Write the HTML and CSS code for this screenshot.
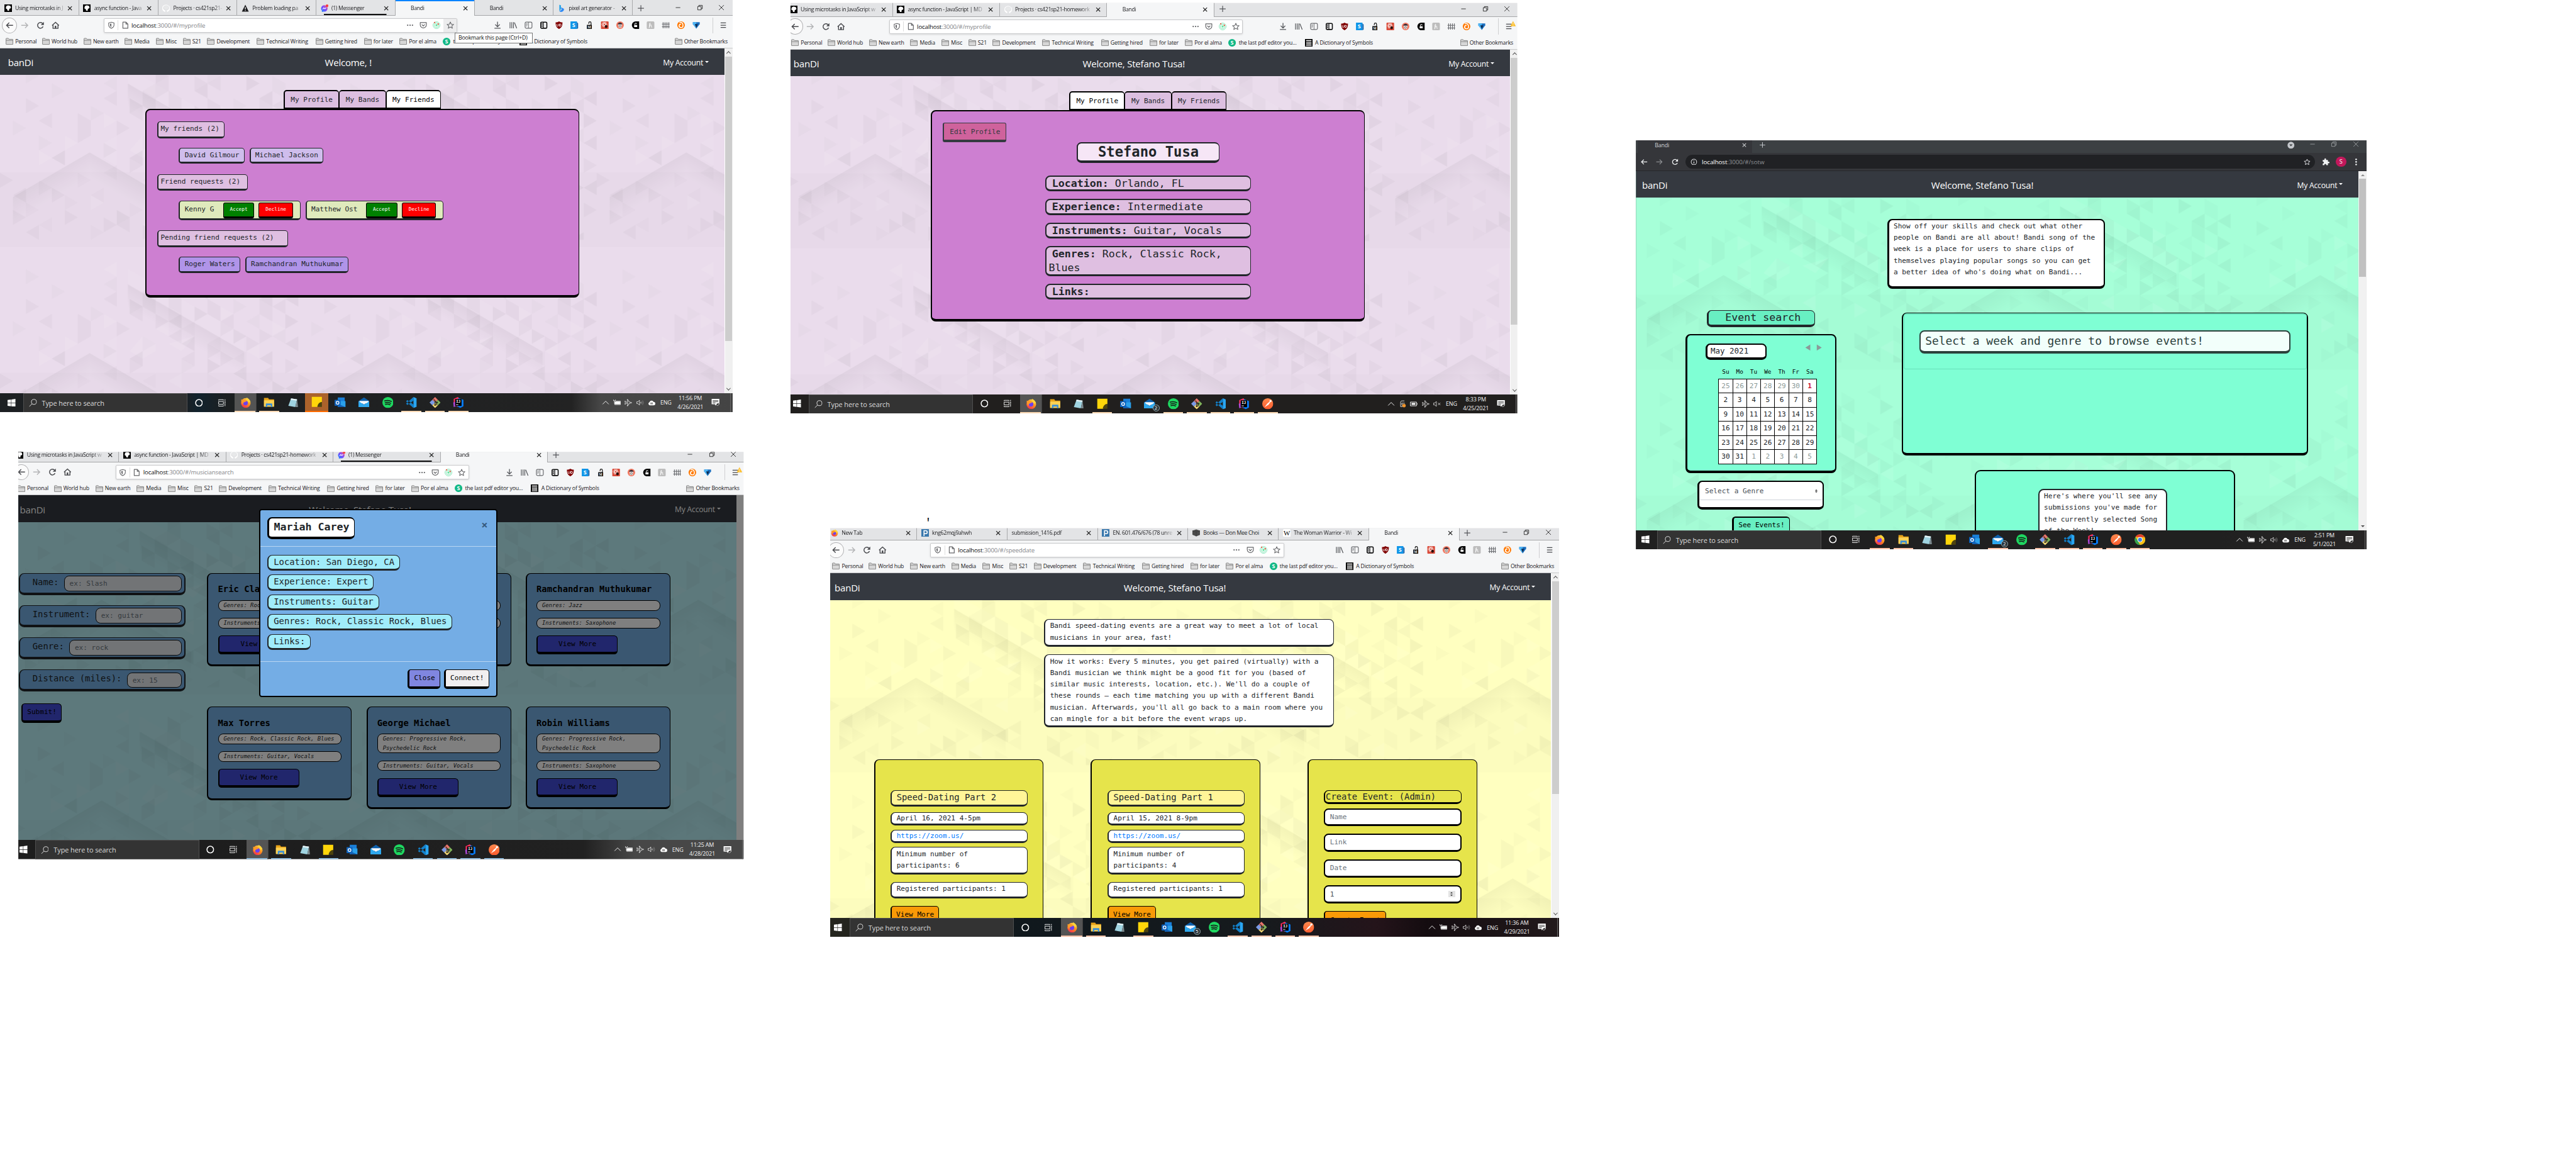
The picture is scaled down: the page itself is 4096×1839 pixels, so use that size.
FILE: index.html
```html
<!DOCTYPE html>
<html lang="en">
<head>
<meta charset="utf-8">
<title>Bandi screens</title>
<link rel="stylesheet" href="styles.css">
</head>
<body>
<svg class="defs" aria-hidden="true">
  <defs>
    <linearGradient id="g-msgr" x1="0" y1="1" x2="1" y2="0"><stop offset="0" stop-color="#0a8bff"/><stop offset=".5" stop-color="#7a4bff"/><stop offset="1" stop-color="#ff5f7a"/></linearGradient>
    <linearGradient id="g-fox" x1=".8" y1="0" x2=".2" y2="1"><stop offset="0" stop-color="#ffe14a"/><stop offset=".5" stop-color="#ff8a1e"/><stop offset="1" stop-color="#f0205a"/></linearGradient>
    <linearGradient id="g-post" x1="0" y1="0" x2="0" y2="1"><stop offset="0" stop-color="#ff8a4f"/><stop offset="1" stop-color="#fa5a2d"/></linearGradient>
    <linearGradient id="g-ridge-l" gradientUnits="userSpaceOnUse" x1="130" y1="337" x2="160" y2="389"><stop offset="0" stop-opacity=".045"/><stop offset="1" stop-opacity="0"/></linearGradient>
    <linearGradient id="g-ridge-r" gradientUnits="userSpaceOnUse" x1="340" y1="339" x2="311" y2="389"><stop offset="0" stop-opacity=".045"/><stop offset="1" stop-opacity="0"/></linearGradient>
    <linearGradient id="g-ridge-t" gradientUnits="userSpaceOnUse" x1="470" y1="175" x2="443" y2="222"><stop offset="0" stop-opacity=".045"/><stop offset="1" stop-opacity="0"/></linearGradient>
    <pattern id="facets" patternUnits="userSpaceOnUse" width="782" height="526" patternTransform="scale(.60664) translate(0 -75)">
      <rect y="330" width="782" height="196" opacity=".01"/>
      <path fill="url(#g-ridge-l)" d="M34 395L235 278V360L34 476z"/>
      <path fill="url(#g-ridge-r)" d="M235 278L470 415V495L235 360z"/>
      <path fill="url(#g-ridge-t)" d="M335 98L640 274V350L335 175z"/>
      <path fill="#fff" opacity=".06" d="M335 98L640 274V230L335 58zM306 235v78l-34-20v-39z"/>
      <g transform="scale(34 19.5)">
        <path opacity=".015" d="M2 3l1 1-1 1zM4 5l1 1-1 1zM7 8l1 1-1 1zM1 10l1 1-1 1zM3 12l1 1-1 1zM5 14l-1 1 1 1zM9 4l-1 1 1 1zM10 7l1 1-1 1zM12 5l-1 1 1 1zM13 8l1 1-1 1zM15 10l-1 1 1 1zM16 3l1 1-1 1zM17 12l-1 1 1 1zM18 7l1 1-1 1zM20 9l-1 1 1 1zM21 4l1 1-1 1zM22 11l-1 1 1 1zM14 15l1 1-1 1zM12 17l-1 1 1 1zM16 17l1 1-1 1zM19 14l-1 1 1 1zM20 17l1 1-1 1zM8 19l-1 1 1 1zM5 20l1 1-1 1zM2 21l1 1-1 1zM10 21l1 1-1 1zM15 22l-1 1 1 1zM13 24l1 1-1 1zM18 21l1 1-1 1zM21 22l-1 1 1 1zM7 24l1 1-1 1zM3 18l1 1-1 1zM11 12l1 1-1 1zM9 16l-1 1 1 1zM20 21l1 1-1 1zM22 5l-1 1 1 1zM13 2l1 1-1 1zM19 2l-1 1 1 1zM6 17l1 1-1 1zM4 23l-1 1 1 1z"/>
        <path opacity=".028" d="M2 7l1 1-1 1zM4 9l-1 1 1 1zM6 9l1 1v2l-1 1zM9 6l-1 1 1 1zM10 7l1 1v2l-1-1zM9 10l1 1-1 1zM11 6l1 1-1 1zM12 7l-1 1 1 1zM13 6l1 1-1 1zM14 7l-1 1 1 1zM13 4l-1 1v2l1-1zM12 9l1 1-1 1zM14 11l-1 1 1 1zM15 14l-1 1 1 1zM10 15l1 1-1 1zM5 14l-1 1 1 1zM9 14l-1-1v2zM2 19l-1 1 1 1zM0 17l1 1-1 1zM4 19l1 1-1 1zM16 13l1 1-1 1zM17 14l1 1v2l-1-1zM19 12l1 1-1 1zM20 11l1 1-1 1zM18 15l-1 1 1 1zM18 9l-1 1v2l1-1zM20 7l1 1v2l-1-1zM22 7l-1 1 1 1zM22 15l1 1-1 1zM21 16l-1 1 1 1zM19 18l1 1-1 1zM16 7l1 1v2l-1-1zM15 4l1 1-1 1zM17 4l-1 1 1 1zM1 22l1 1-1 1zM3 24l-1 1 1 1zM8 23l1 1-1 1zM10 23l-1 1 1 1zM12 21l1 1-1 1zM15 20l-1 1 1 1zM17 22l1 1-1 1zM19 24l-1 1 1 1zM22 21l1 1-1 1zM11 24l1 1-1 1zM16 25l-1 1h1zM5 22l1 1-1 1z"/>
        <path opacity=".04" d="M14 9l-1 1 1 1zM15 12l-1 1 1 1zM11 14l-1 1 1 1zM15 8l1 1-1 1zM16 5l-1 1 1 1zM19 4l1 1-1 1zM21 6l-1 1 1 1zM18 11l1 1-1 1zM22 9l1 1-1 1zM23 12l-1 1 1 1zM19 16l-1 1 1 1zM21 18l1 1-1 1zM16 15l1 1-1 1zM23 18l-1 1 1 1zM21 14l-1 1 1 1zM9 22l1 1-1 1zM14 21l-1 1 1 1zM22 25l-1 1h1zM18 23l-1 1 1 1zM23 6l-1 1 1 1zM12 3l1 1-1 1zM20 25l1 1h-1z"/>
        <path fill="#fff" opacity=".08" d="M13 10l-1 1 1 1zM11 12l1 1v1l-1 1-1-1zM15 12l-2 1 1 1zM8 9l1 1-1 1zM5 12l1 1-1 1zM17 8l1 1-1 1zM20 13l-1 1 1 1zM21 10l1 1-1 1zM9 2l-1 1 1 1zM3 14l1 1-1 1zM7 20l1 1-1 1zM12 23l-1 1 1 1zM17 18l1 1-1 1zM20 23l-1 1 1 1zM14 17l-1 1 1 1z"/>
      </g>
    </pattern>
  </defs>

  <symbol id="close" viewBox="0 0 20 20"><path d="M4 4l12 12M16 4L4 16" fill="none" stroke="currentColor" stroke-width="2.200"/></symbol>
  <symbol id="plus" viewBox="0 0 20 20"><path d="M10 2v16M2 10h16" fill="none" stroke="currentColor" stroke-width="2"/></symbol>
  <symbol id="minimize" viewBox="0 0 20 20"><path d="M4 10h12" stroke="currentColor" stroke-width="1.3"/></symbol>
  <symbol id="restore" viewBox="0 0 20 20"><path d="M4 7h9v9H4zM7 7V4h9v9h-3" fill="none" stroke="currentColor" stroke-width="1.3"/></symbol>
  <symbol id="win-close" viewBox="0 0 20 20"><path d="M3.500 3.500l13 13M16.500 3.500l-13 13" stroke="currentColor" stroke-width="1.300"/></symbol>
  <symbol id="back" viewBox="0 0 24 24"><path d="M21 12H4M11 5l-7 7 7 7" fill="none" stroke="currentColor" stroke-width="2.400"/></symbol>
  <symbol id="forward" viewBox="0 0 24 24"><path d="M3 12h17M13 5l7 7-7 7" fill="none" stroke="currentColor" stroke-width="2.400"/></symbol>
  <symbol id="reload" viewBox="0 0 24 24"><path d="M19 15a7.500 7.500 0 1 1-1-7.500" fill="none" stroke="currentColor" stroke-width="2.400"/><path d="M21 3v8h-8z" fill="currentColor"/></symbol>
  <symbol id="home" viewBox="0 0 24 24"><path d="M3 12.500L12 4l9 8.500M5.500 11v9h13v-9" fill="none" stroke="currentColor" stroke-width="2.400"/><path d="M10 13h4v7h-4z" fill="currentColor"/></symbol>
  <symbol id="shield" viewBox="0 0 20 20"><path d="M3 4l7-2 7 2v5c0 5-3 7.500-7 9-4-1.500-7-4-7-9z" fill="none" stroke="currentColor" stroke-width="1.800"/><path d="M10 5.500l-3.500 1V9c0 3 1.500 4.500 3.500 6z" fill="currentColor"/></symbol>
  <symbol id="page" viewBox="0 0 20 20"><path d="M4 2h8l5 5v11H4zM12 2v5h5" fill="none" stroke="currentColor" stroke-width="2" stroke-linejoin="round"/></symbol>
  <symbol id="dots" viewBox="0 0 24 24"><g fill="currentColor"><circle cx="4.500" cy="12" r="2.300"/><circle cx="12" cy="12" r="2.300"/><circle cx="19.500" cy="12" r="2.300"/></g></symbol>
  <symbol id="pocket" viewBox="0 0 20 20"><path d="M2 3h16v6a8 8 0 0 1-16 0zM6 8l4 4 4-4" fill="none" stroke="currentColor" stroke-width="2" stroke-linejoin="round"/></symbol>
  <symbol id="target" viewBox="0 0 20 20"><g fill="none" stroke="#7fe3b4" stroke-width="1.500"><circle cx="10" cy="10" r="9"/><circle cx="10" cy="10" r="6"/></g><circle cx="10" cy="10" r="3" fill="#66e6a4"/><circle cx="5" cy="3" r="1.900" fill="#e9573f"/><circle cx="14.500" cy="7" r="1.900" fill="#e9573f"/></symbol>
  <symbol id="star" viewBox="0 0 20 20"><path d="M10 1.800l2.500 5.500 6 .6-4.500 4 1.300 6-5.300-3.100L4.700 17.900l1.300-6-4.500-4 6-.6z" fill="none" stroke="currentColor" stroke-width="1.800" stroke-linejoin="round"/></symbol>
  <symbol id="menu" viewBox="0 0 20 20"><path d="M3 4h14M3 10h14M3 16h14" stroke="currentColor" stroke-width="2.200"/></symbol>
  <symbol id="warn" viewBox="0 0 20 20"><path d="M10 1l9 17H1z" fill="#fdbf2d"/><path d="M10 7v6M10 14.500v2" stroke="#fff" stroke-width="1.500"/></symbol>
  <symbol id="folder" viewBox="0 0 20 18"><path d="M1 16.500V2q0-1 1-1h5l2 2.500h9q1 0 1 1v12q0 .5-.5.500h-17z" fill="#d7d7d7" stroke="#6f6f6f" stroke-width="1.300"/><path d="M1 6.500h18" stroke="#6f6f6f" stroke-width="1.200"/></symbol>
  <symbol id="s-green" viewBox="0 0 20 20"><circle cx="10" cy="10" r="10" fill="#12b886"/><text x="10" y="15.200" font-size="15" font-weight="700" text-anchor="middle" fill="#fff" font-family="Open Sans">S</text></symbol>
  <symbol id="pillars" viewBox="0 0 20 20"><path d="M0 0h20v20H0z"/><path d="M3 3h14v2.500H3zM4 7h2v9H4zM7.500 7h2v9h-2zM11 7h2v9h-2zM14.500 7h2v9h-2zM2.500 17h15v1h-15z" fill="#fff"/></symbol>

  <symbol id="x-download" viewBox="0 0 20 20"><path d="M10 1v12M4 8l6 6 6-6M2 18h16" fill="none" stroke="#55575b" stroke-width="2.200"/></symbol>
  <symbol id="extensions" viewBox="0 0 520 20">
    <path d="M1.500 2v16M6 2v16M10.500 2v16M13 3l6 15" stroke="#55575b" stroke-width="2" fill="none"/>
    <g transform="translate(40)"><rect x="1" y="2" width="18" height="16" rx="3" fill="none" stroke="#6a6c70" stroke-width="2"/><path d="M10 2v16M3.500 6h4M3.500 9h4M3.500 12h3" stroke="#6a6c70" stroke-width="1.500"/></g>
    <g transform="translate(80)"><rect x="2" y="2" width="16" height="16" rx="2.500" fill="none" stroke="#0c0c0d" stroke-width="2.600"/><path d="M9 2v16M4 6h3M4 9.500h3M4 13h3" stroke="#0c0c0d" stroke-width="2"/></g>
    <g transform="translate(120)"><path d="M10 0c3 2 6 2.500 9 2.500 0 9-1.500 13-9 17.500-7.500-4.500-9-8.500-9-17.500 3 0 6-.5 9-2.500z" fill="#800000"/><path d="M4 7v4q0 1.500 2 1.500T8.500 11V7M11 7h2.500q2 0 2 2.700t-2 2.700H11z" fill="none" stroke="#fff" stroke-width="1.500"/></g>
    <g transform="translate(160)"><path d="M0 0h17v20H0z" fill="#0f95e8"/><path d="M17 2l3 3v13l-3 2z" fill="#0a5aa8"/><text x="8.500" y="15.500" font-size="15" font-weight="700" text-anchor="middle" fill="#fff" font-family="Open Sans">S</text></g>
    <g transform="translate(200)"><path d="M3 9h13v11H3z" fill="#111"/><path d="M8 6V4a3 3 0 0 1 6 0v6" fill="none" stroke="#111" stroke-width="2"/><text x="9.500" y="18" font-size="9" font-weight="700" text-anchor="middle" fill="#fff" font-family="Liberation Serif">M</text></g>
    <g transform="translate(240)"><rect width="20" height="20" rx="2" fill="#d94b3a"/><g fill="none" stroke="#fff" stroke-width="1.100"><ellipse cx="9" cy="8" rx="7" ry="2.800"/><ellipse cx="9" cy="8" rx="7" ry="2.800" transform="rotate(60 9 8)"/><ellipse cx="9" cy="8" rx="7" ry="2.800" transform="rotate(120 9 8)"/></g><ellipse cx="13.500" cy="13.500" rx="3.500" ry="4" fill="#2a0f0c"/></g>
    <g transform="translate(280)"><circle cx="10" cy="10" r="10" fill="#f27a63"/><path d="M4 6q6-6 12 0l-1 3H5z" fill="#3b2b33"/><path d="M5 8h10l-1.500 9h-7z" fill="#e8e2e0"/><circle cx="10" cy="12.500" r="2.500" fill="none" stroke="#555" stroke-width="1.200"/></g>
    <g transform="translate(320)"><path d="M20 0v20h-9a10 10 0 0 1 0-20z" fill="#000"/><path d="M7 9.500h8V15H7z" fill="#fff"/><path d="M9 9V7a2.300 2.300 0 0 1 4.600 0" fill="none" stroke="#fff" stroke-width="1.700"/></g>
    <g transform="translate(360)"><rect width="20" height="20" rx="3" fill="#bdbdbd"/><path d="M6 17c2-5 3-9 3-13-2 0-2 4-2 12M8 12c2-4 5-4 4 0-.6 3 0 4 2.500 2.500" fill="none" stroke="#fff" stroke-width="1.500"/></g>
    <g transform="translate(400)"><path d="M3 2v16M8 2v16M13 2v16M18 2v16M0 7h20M0 14h20" stroke="#6a6c70" stroke-width="1.900"/></g>
    <g transform="translate(440)"><circle cx="10" cy="10" r="10" fill="#ff7800"/><path d="M6 3q8-2 9 6t-6 7Q4 15 5 10q2-4 5-2" fill="none" stroke="#fff" stroke-width="2.600"/></g>
    <g transform="translate(480)"><path d="M1 2h18v5l-9 12L1 7z" fill="#1b6fc0"/><path d="M1 2h9v17L1 7z" fill="#4db5f5"/><path d="M6 7h8l-4 10z" fill="#0c2b52"/></g>
  </symbol>

  <symbol id="f-mdn" viewBox="0 0 20 20"><path d="M0 0h20v20H0z"/><path d="M4 8q0-4 4-5 2-1 4 0 4 0 5 4 .5 3-2 4h-2l-1 6-4-1-1-4-3-1z" fill="#fff"/></symbol>
  <symbol id="f-github" viewBox="0 0 20 20"><path d="M10 1.500a9 9 0 0 0-3 17.500v-3q-3 0-3.500-2.500M10 1.500A9 9 0 0 1 13 19v-4" fill="none" stroke="#fff" stroke-width="1.500"/><path d="M5 3l3 1.500h4L15 3l.8 4q1 5-5.800 5.500Q3.500 12 4.200 7z" fill="#e8e9ea"/><path d="M2 6q-1 6 2 8l3 2v3q-6-2-6.500-8T3 3l2 0zM18 6q1 6-2 8l-3 2v3q6-2 6.500-8T17 3z" fill="#fff"/></symbol>
  <symbol id="f-alert" viewBox="0 0 20 20"><path d="M10 1l9 18H1z" fill="#1c1c1e"/><path d="M10 7v6M10 14.800v2" stroke="#fff" stroke-width="2"/></symbol>
  <symbol id="f-messenger" viewBox="0 0 20 20"><path d="M9.500 2a8.500 8.500 0 0 1 0 17H6l-3 1v-4A8.500 8.500 0 0 1 9.500 2z" fill="url(#g-msgr)"/><path d="M5 12.500l3-3.500 3 2.500 3-3" fill="none" stroke="#fff" stroke-width="1.800"/><circle cx="16.500" cy="3.500" r="3.500" fill="#fa3e3e"/></symbol>
  <symbol id="f-bing" viewBox="0 0 20 20"><path d="M4 1l4 1.500V12l-4 6z" fill="#1d9fe8"/><path d="M8 7.500l8 4q1 5-4 7.500l-4 1-4-2 6-4.500z" fill="#2f8af5"/></symbol>
  <symbol id="f-piazza" viewBox="0 0 20 20"><path d="M0 0h20v20H0z" fill="#3a78ad"/><path d="M7 18V4h4.500a4 4 0 0 1 0 8H7" fill="none" stroke="#fff" stroke-width="2.600"/></symbol>
  <symbol id="f-box" viewBox="0 0 20 20"><path d="M10 1l10 3v11l-10 4-10-4V4z" fill="#4c4c4c"/><path d="M0 4l10 3.500L20 4M10 7.500V19" stroke="#333" fill="none"/></symbol>
  <symbol id="f-wiki" viewBox="0 0 20 20"><rect width="20" height="20" rx="3" fill="#fff"/><text x="10" y="16" font-size="18" text-anchor="middle" font-family="Liberation Serif">W</text></symbol>

  <symbol id="windows" viewBox="0 0 20 20"><path d="M0 2.800l8.700-1.200v8H0zM9.700 1.500L20 0v9.600H9.700zM0 10.500h8.700v8L0 17.300zM9.700 10.500H20V20L9.700 18.600z" fill="#fff"/></symbol>
  <symbol id="magnifier" viewBox="0 0 20 20"><circle cx="12.500" cy="7.500" r="6.300" fill="none" stroke="#f2f2f2" stroke-width="1.400"/><path d="M8 12l-7 7" stroke="#f2f2f2" stroke-width="1.400"/></symbol>
  <symbol id="cortana" viewBox="0 0 20 20"><circle cx="10" cy="10" r="8.300" fill="none" stroke="#fff" stroke-width="2.400"/></symbol>
  <symbol id="taskview" viewBox="0 0 20 20"><path d="M1 6.500h12v7H1zM1 4V2h12v2M1 16v2h12v-2M17 1v4M17 10v8" fill="none" stroke="#fff" stroke-width="1.400"/><path d="M15.800 6.500h2.400v2.400h-2.400z" fill="#fff"/></symbol>
  <symbol id="firefox" viewBox="0 0 24 24"><circle cx="12" cy="13" r="10.500" fill="url(#g-fox)"/><path d="M14 1q6 3 8.500 9l-4 2-5-5z" fill="#ffd43a"/><circle cx="11.500" cy="13" r="5" fill="#6b3ff0"/><path d="M2 5l3 1q3-2 6 0 2 2 4 1.500-2 3-5.500 3.500Q5 13 6 17q-4-3-4-12z" fill="#ff9a28"/></symbol>
  <symbol id="explorer" viewBox="0 0 24 24"><path d="M1 2h9l2 3h11v15H1z" fill="#e8a317"/><path d="M1 7h22v14H1z" fill="#fbd155"/><path d="M5 22v-7q0-1 1-1h12q1 0 1 1v7h-3v-4H8v4z" fill="#3b8fd6"/></symbol>
  <symbol id="notepad" viewBox="0 0 24 24"><path d="M8 3l13 2-4 17L2 19z" fill="#9fd3e0"/><path d="M8 3l13 2-1 3L7 6z" fill="#e9f5f7"/><path d="M21 5l2 17-6 0z" fill="#7c8a8f"/></symbol>
  <symbol id="sticky" viewBox="0 0 24 24"><path d="M1 1h22v12l-9 10H1z" fill="#ffd60a"/><path d="M23 12v11H13q1-10 10-11z" fill="#4d430f"/></symbol>
  <symbol id="outlook" viewBox="0 0 24 24"><path d="M7 1h15v10H7z" fill="#1a7fd8"/><path d="M7 9h17v13H7z" fill="#2aa0ea"/><path d="M7 15l17 7H7z" fill="#135fb0"/><rect y="6" width="13" height="13" rx="1" fill="#0f62bb"/><circle cx="6.500" cy="12.500" r="3" fill="none" stroke="#fff" stroke-width="1.800"/></symbol>
  <symbol id="mail" viewBox="0 0 24 24"><path d="M0 9l12-8 12 8v13H0z" fill="#0d60ad"/><path d="M2 9h20v5H2z" fill="#f4f9fd"/><path d="M0 9l12 8 12-8v13H0z" fill="#2ea8ee"/><path d="M2 9h20l-10 7.500z" fill="#f4f9fd"/></symbol>
  <symbol id="spotify" viewBox="0 0 24 24"><circle cx="12" cy="12" r="12" fill="#1ed760"/><path d="M5 8.500q8-2.500 14.500 1.300M6 12.500q7-2 12 1.200M6.800 16q5.500-1.500 9.700 1" fill="none" stroke="#171717" stroke-width="2" stroke-linecap="round"/></symbol>
  <symbol id="vscode" viewBox="0 0 24 24"><path d="M17 0l7 3v18l-7 3z" fill="#2aa6f2"/><path d="M17 0L1 14.500l2.500 3L18 7zM17 24L1 9.500l2.500-3L18 17z" fill="#1480c9"/></symbol>
  <symbol id="git" viewBox="0 0 24 24"><path d="M12 0l6 6-6 6-6-6z" fill="#e9756b"/><path d="M18 6l6 6-6 6-6-6z" fill="#80b35a"/><path d="M12 12l6 6-6 6-6-6z" fill="#f2d774"/><path d="M6 6l6 6-6 6-6-6z" fill="#7c9be6"/><path d="M9 5l6 7v6M12 8v9" fill="none" stroke="#2a2622" stroke-width="1.600"/><circle cx="12" cy="17.500" r="1.700" fill="#2a2622"/><circle cx="16.500" cy="12" r="1.700" fill="#2a2622"/></symbol>
  <symbol id="intellij" viewBox="0 0 24 24"><path d="M2 4l9-4 6 6-6 16-9-6z" fill="#fe315d"/><path d="M12 2l11 4v14l-7 4-8-5z" fill="#087cfa"/><path d="M1 12l6-2 2 9-7 3z" fill="#b04ad8"/><path d="M5 4.500h14v15H5z"/><path d="M7 16.500h5" stroke="#fff" stroke-width="1.300"/><text x="7" y="12" font-size="8" font-weight="700" fill="#fff" font-family="DejaVu Sans Mono">IJ</text></symbol>
  <symbol id="postman" viewBox="0 0 24 24"><circle cx="12" cy="12" r="12" fill="url(#g-post)"/><path d="M5 19.500l6-8 5-4 1.500 1.500-4 5z" fill="#fff"/><circle cx="18" cy="6" r="2.300" fill="#fff"/></symbol>
  <symbol id="chrome" viewBox="0 0 24 24"><circle cx="12" cy="12" r="11.500" fill="#fbc116"/><path d="M2 6.200A11.500 11.500 0 0 1 22 6.500H12z" fill="#e33b2e"/><path d="M2 6.200L8 16l4 7.500A11.500 11.500 0 0 1 2 6.200z" fill="#34a350"/><circle cx="12" cy="12" r="5.500" fill="#fff"/><circle cx="12" cy="12" r="4.300" fill="#3f7fe8"/></symbol>

  <symbol id="t-up" viewBox="0 0 20 20"><path d="M2 14l8-8 8 8" fill="none" stroke="#fff" stroke-width="1.500"/></symbol>
  <symbol id="t-plug" viewBox="0 0 20 20"><path d="M5 7h13v7H5z" fill="#fff"/><path d="M4 8v7h15V6H7M19.500 9v3M1 2v3h5V2M3.500 5v8" fill="none" stroke="#fff" stroke-width="1.300"/></symbol>
  <symbol id="t-battery" viewBox="0 0 20 20"><path d="M1 5h16v10H1zM18.500 8v4" fill="none" stroke="#fff" stroke-width="1.500"/><path d="M4 7.500h10v5H4z" fill="#fff"/></symbol>
  <symbol id="t-plane" viewBox="0 0 20 20"><path d="M19 10q-1-1.500-6-1.500L8.500 1.500H7l2 7H4.500L2.500 6H1l1.200 4L1 14h1.500l2-2.500H9l-2 7h1.500l4.500-7q5 0 6-1.500z" fill="none" stroke="#fff" stroke-width="1.200"/></symbol>
  <symbol id="t-sound" viewBox="0 0 20 20"><path d="M1 7.500h3l4-4v13l-4-4H1z" fill="none" stroke="#fff" stroke-width="1.200"/><path d="M11 8q1.500 2 0 4" fill="none" stroke="#fff" stroke-width="1.200"/><path d="M13.500 6q3 4 0 8M16 4q4.500 6 0 12" fill="none" stroke="#8a8a8a" stroke-width="1.200"/></symbol>
  <symbol id="t-mute" viewBox="0 0 20 20"><path d="M1 7.500h3l4-4v13l-4-4H1zM12.500 7l6 6M18.500 7l-6 6" fill="none" stroke="#fff" stroke-width="1.200"/></symbol>
  <symbol id="t-cloud" viewBox="0 0 20 20"><path d="M5 17a4.500 4.500 0 0 1-.5-8.500A5.500 5.500 0 0 1 15 8a4.500 4.500 0 0 1 .5 9z" fill="#fff"/><path d="M8.300 9.500v5M11.700 9.500v5" stroke="#333" stroke-width="1.700"/></symbol>
  <symbol id="t-sync" viewBox="0 0 20 20"><path d="M15 2H7L5 5v12h6M8 8h8M8 8q0 7 3 7" fill="none" stroke="#fff" stroke-width="1.300"/><circle cx="14" cy="14.500" r="4.500" fill="#f0932b"/></symbol>
  <symbol id="t-note" viewBox="0 0 24 24"><path d="M1 2h22v15h-8l-4 4v-4H1z" fill="#fff"/><path d="M4 6.500h16M4 10h16M4 13.500h8" stroke="#333" stroke-width="1.600"/><path d="M16 14q4 2 5-2 3 5-1 8-4 2-6-1 2-2 2-5z" fill="#333" stroke="#fff"/></symbol>

  <symbol id="c-info" viewBox="0 0 20 20"><circle cx="10" cy="10" r="8" fill="none" stroke="currentColor" stroke-width="1.900"/><path d="M10 9v5.500M10 5.500v2" stroke="currentColor" stroke-width="2.200"/></symbol>
  <symbol id="c-puzzle" viewBox="0 0 20 20"><path d="M2 5h4.500q-1-4 1.800-4t1.800 4H15v4.500q4-1 4 1.800t-4 1.800V18h-4q0-3-2.500-3T6 18H2v-4q3 0 3-2.500T2 9z" fill="currentColor"/></symbol>
  <symbol id="c-kebab" viewBox="0 0 20 20"><g fill="currentColor"><circle cx="10" cy="3.500" r="2"/><circle cx="10" cy="10" r="2"/><circle cx="10" cy="16.500" r="2"/></g></symbol>
  <symbol id="c-down" viewBox="0 0 20 20"><circle cx="10" cy="10" r="9.500" fill="#c4c7cb"/><path d="M5.500 8h9L10 13z" fill="#3c4043"/></symbol>
</svg>

<main class="canvas">

<!-- Friends tab -->
<section class="window win-friends">
  <div class="tabstrip tabs-8">
    <div class="tab"><svg class="fav"><use href="#f-mdn"/></svg><span>Using microtasks in J</span><svg class="x"><use href="#close"/></svg></div>
    <div class="tab"><svg class="fav"><use href="#f-mdn"/></svg><span>async function - Java</span><svg class="x"><use href="#close"/></svg></div>
    <div class="tab"><svg class="fav"><use href="#f-github"/></svg><span>Projects · cs421sp21-</span><svg class="x"><use href="#close"/></svg></div>
    <div class="tab"><svg class="fav"><use href="#f-alert"/></svg><span>Problem loading pa</span><svg class="x"><use href="#close"/></svg></div>
    <div class="tab attention"><svg class="fav"><use href="#f-messenger"/></svg><span>(1) Messenger</span><svg class="x"><use href="#close"/></svg></div>
    <div class="tab active blank"><span>Bandi</span><svg class="x"><use href="#close"/></svg></div>
    <div class="tab blank"><span>Bandi</span><svg class="x"><use href="#close"/></svg></div>
    <div class="tab"><svg class="fav"><use href="#f-bing"/></svg><span>pixel art generator -</span><svg class="x"><use href="#close"/></svg></div>
    <svg class="newtab"><use href="#plus"/></svg>
    <div class="controls"><svg><use href="#minimize"/></svg><svg><use href="#restore"/></svg><svg><use href="#win-close"/></svg></div>
  </div>
  <div class="toolbar">
    <div class="nav"><i class="circle"><svg><use href="#back"/></svg></i><i class="off"><svg><use href="#forward"/></svg></i><i><svg><use href="#reload"/></svg></i><i><svg><use href="#home"/></svg></i></div>
    <div class="urlbar"><i><svg><use href="#shield"/></svg></i><i class="page-info"><svg><use href="#page"/></svg></i><p><b>localhost</b>:3000/#/myprofile</p><i><svg><use href="#dots"/></svg></i><i><svg><use href="#pocket"/></svg></i><i><svg><use href="#target"/></svg></i><i class="hover"><svg><use href="#star"/></svg></i></div>
    <div class="addons"><svg class="dl"><use href="#x-download"/></svg><svg class="ext"><use href="#extensions"/></svg></div>
    <div class="appmenu"><svg><use href="#menu"/></svg></div>
  </div>
  <div class="bookmarks">
    <a><svg><use href="#folder"/></svg>Personal</a><a><svg><use href="#folder"/></svg>World hub</a><a><svg><use href="#folder"/></svg>New earth</a><a><svg><use href="#folder"/></svg>Media</a><a><svg><use href="#folder"/></svg>Misc</a><a><svg><use href="#folder"/></svg>S21</a><a><svg><use href="#folder"/></svg>Development</a><a><svg><use href="#folder"/></svg>Technical Writing</a><a><svg><use href="#folder"/></svg>Getting hired</a><a><svg><use href="#folder"/></svg>for later</a><a><svg><use href="#folder"/></svg>Por el alma</a><a><svg><use href="#s-green"/></svg>the last pdf editor you...</a><a><svg><use href="#pillars"/></svg>A Dictionary of Symbols</a><a class="other"><svg><use href="#folder"/></svg>Other Bookmarks</a>
  </div>
  <div class="tooltip">Bookmark this page (Ctrl+D)</div>
  <div class="viewport">
    <div class="page lilac">
      <header class="navbar"><b>banDi</b><b>Welcome, !</b><span class="account">My Account</span></header>
      <div class="content">
        <svg class="backdrop"><rect width="100%" height="100%" fill="url(#facets)"/></svg>
        <nav class="pills-nav"><a>My Profile</a><a>My Bands</a><a class="on">My Friends</a></nav>
        <div class="panel friends-panel">
          <h3 class="label">My friends (2)</h3>
          <ul class="people"><li>David Gilmour</li><li>Michael Jackson</li></ul>
          <h3 class="label">Friend requests (2)</h3>
          <ul class="requests"><li>Kenny G <button class="accept">Accept</button><button class="decline">Decline</button></li><li>Matthew Ost <button class="accept">Accept</button><button class="decline">Decline</button></li></ul>
          <h3 class="label wide">Pending friend requests (2)</h3>
          <ul class="people pending"><li>Roger Waters</li><li>Ramchandran Muthukumar</li></ul>
        </div>
      </div>
    </div>
    <div class="scrollbar"><i class="up"></i><i class="thumb"></i><i class="down"></i></div>
  </div>
  <footer class="taskbar">
    <i class="start"><svg><use href="#windows"/></svg></i><div class="search"><svg><use href="#magnifier"/></svg>Type here to search</div><i class="sys"><svg><use href="#cortana"/></svg></i><i class="sys"><svg><use href="#taskview"/></svg></i>
    <i class="app run front"><svg><use href="#firefox"/></svg></i><i class="app run"><svg><use href="#explorer"/></svg></i><i class="app"><svg><use href="#notepad"/></svg></i><i class="app alerting"><svg><use href="#sticky"/></svg></i><i class="app"><svg><use href="#outlook"/></svg></i><i class="app"><svg><use href="#mail"/></svg></i><i class="app"><svg><use href="#spotify"/></svg></i><i class="app run"><svg><use href="#vscode"/></svg></i><i class="app run"><svg><use href="#git"/></svg></i><i class="app run"><svg><use href="#intellij"/></svg></i>
    <div class="tray"><svg><use href="#t-up"/></svg><svg><use href="#t-plug"/></svg><svg><use href="#t-plane"/></svg><svg><use href="#t-sound"/></svg><svg><use href="#t-cloud"/></svg><span class="lang">ENG</span><span class="clock">11:56 PM<br>4/26/2021</span><svg class="note"><use href="#t-note"/></svg></div>
  </footer>
</section>

<!-- Profile tab -->
<section class="window win-profile">
  <div class="tabstrip tabs-4">
    <div class="tab"><svg class="fav"><use href="#f-mdn"/></svg><span>Using microtasks in JavaScript w</span><svg class="x"><use href="#close"/></svg></div>
    <div class="tab"><svg class="fav"><use href="#f-mdn"/></svg><span>async function - JavaScript | MD</span><svg class="x"><use href="#close"/></svg></div>
    <div class="tab"><svg class="fav"><use href="#f-github"/></svg><span>Projects · cs421sp21-homework</span><svg class="x"><use href="#close"/></svg></div>
    <div class="tab active blank"><span>Bandi</span><svg class="x"><use href="#close"/></svg></div>
    <svg class="newtab"><use href="#plus"/></svg>
    <div class="controls"><svg><use href="#minimize"/></svg><svg><use href="#restore"/></svg><svg><use href="#win-close"/></svg></div>
  </div>
  <div class="toolbar">
    <div class="nav"><i class="circle"><svg><use href="#back"/></svg></i><i class="off"><svg><use href="#forward"/></svg></i><i><svg><use href="#reload"/></svg></i><i><svg><use href="#home"/></svg></i></div>
    <div class="urlbar"><i><svg><use href="#shield"/></svg></i><i class="page-info"><svg><use href="#page"/></svg></i><p><b>localhost</b>:3000/#/myprofile</p><i><svg><use href="#dots"/></svg></i><i><svg><use href="#pocket"/></svg></i><i><svg><use href="#target"/></svg></i><i><svg><use href="#star"/></svg></i></div>
    <div class="addons"><svg class="dl"><use href="#x-download"/></svg><svg class="ext"><use href="#extensions"/></svg></div>
    <div class="appmenu"><svg><use href="#menu"/></svg><svg class="badge"><use href="#warn"/></svg></div>
  </div>
  <div class="bookmarks">
    <a><svg><use href="#folder"/></svg>Personal</a><a><svg><use href="#folder"/></svg>World hub</a><a><svg><use href="#folder"/></svg>New earth</a><a><svg><use href="#folder"/></svg>Media</a><a><svg><use href="#folder"/></svg>Misc</a><a><svg><use href="#folder"/></svg>S21</a><a><svg><use href="#folder"/></svg>Development</a><a><svg><use href="#folder"/></svg>Technical Writing</a><a><svg><use href="#folder"/></svg>Getting hired</a><a><svg><use href="#folder"/></svg>for later</a><a><svg><use href="#folder"/></svg>Por el alma</a><a><svg><use href="#s-green"/></svg>the last pdf editor you...</a><a><svg><use href="#pillars"/></svg>A Dictionary of Symbols</a><a class="other"><svg><use href="#folder"/></svg>Other Bookmarks</a>
  </div>
  <div class="viewport">
    <div class="page lilac">
      <header class="navbar"><b>banDi</b><b>Welcome, Stefano Tusa!</b><span class="account">My Account</span></header>
      <div class="content">
        <svg class="backdrop"><rect width="100%" height="100%" fill="url(#facets)"/></svg>
        <nav class="pills-nav"><a class="on">My Profile</a><a>My Bands</a><a>My Friends</a></nav>
        <div class="panel profile-panel">
          <button class="edit">Edit Profile</button>
          <h1>Stefano Tusa</h1>
          <dl>
            <div><b>Location:</b> Orlando, FL</div>
            <div><b>Experience:</b> Intermediate</div>
            <div><b>Instruments:</b> Guitar, Vocals</div>
            <div class="two"><b>Genres:</b> Rock, Classic Rock,<br>Blues</div>
            <div><b>Links:</b></div>
          </dl>
        </div>
      </div>
    </div>
    <div class="scrollbar"><i class="up"></i><i class="thumb"></i><i class="down"></i></div>
  </div>
  <footer class="taskbar">
    <i class="start"><svg><use href="#windows"/></svg></i><div class="search"><svg><use href="#magnifier"/></svg>Type here to search</div><i class="sys"><svg><use href="#cortana"/></svg></i><i class="sys"><svg><use href="#taskview"/></svg></i>
    <i class="app run front"><svg><use href="#firefox"/></svg></i><i class="app"><svg><use href="#explorer"/></svg></i><i class="app"><svg><use href="#notepad"/></svg></i><i class="app run"><svg><use href="#sticky"/></svg></i><i class="app"><svg><use href="#outlook"/></svg></i><i class="app"><svg><use href="#mail"/></svg><em>2</em></i><i class="app run"><svg><use href="#spotify"/></svg></i><i class="app run"><svg><use href="#git"/></svg></i><i class="app run"><svg><use href="#vscode"/></svg></i><i class="app run"><svg><use href="#intellij"/></svg></i><i class="app run"><svg><use href="#postman"/></svg></i>
    <div class="tray"><svg><use href="#t-up"/></svg><svg><use href="#t-sync"/></svg><svg><use href="#t-battery"/></svg><svg><use href="#t-plane"/></svg><svg><use href="#t-mute"/></svg><span class="lang">ENG</span><span class="clock">8:33 PM<br>4/25/2021</span><svg class="note"><use href="#t-note"/></svg></div>
  </footer>
</section>

<!-- Musician search with profile dialog -->
<section class="window win-search">
  <div class="tabstrip tabs-4">
    <div class="tab"><svg class="fav"><use href="#f-mdn"/></svg><span>Using microtasks in JavaScript w</span><svg class="x"><use href="#close"/></svg></div>
    <div class="tab"><svg class="fav"><use href="#f-mdn"/></svg><span>async function - JavaScript | MD</span><svg class="x"><use href="#close"/></svg></div>
    <div class="tab"><svg class="fav"><use href="#f-github"/></svg><span>Projects · cs421sp21-homework</span><svg class="x"><use href="#close"/></svg></div>
    <div class="tab attention"><svg class="fav"><use href="#f-messenger"/></svg><span>(1) Messenger</span><svg class="x"><use href="#close"/></svg></div>
    <div class="tab active blank"><span>Bandi</span><svg class="x"><use href="#close"/></svg></div>
    <svg class="newtab"><use href="#plus"/></svg>
    <div class="controls"><svg><use href="#minimize"/></svg><svg><use href="#restore"/></svg><svg><use href="#win-close"/></svg></div>
  </div>
  <div class="toolbar">
    <div class="nav"><i class="circle"><svg><use href="#back"/></svg></i><i class="off"><svg><use href="#forward"/></svg></i><i><svg><use href="#reload"/></svg></i><i><svg><use href="#home"/></svg></i></div>
    <div class="urlbar"><i><svg><use href="#shield"/></svg></i><i class="page-info"><svg><use href="#page"/></svg></i><p><b>localhost</b>:3000/#/musiciansearch</p><i><svg><use href="#dots"/></svg></i><i><svg><use href="#pocket"/></svg></i><i><svg><use href="#target"/></svg></i><i><svg><use href="#star"/></svg></i></div>
    <div class="addons"><svg class="dl"><use href="#x-download"/></svg><svg class="ext"><use href="#extensions"/></svg></div>
    <div class="appmenu"><svg><use href="#menu"/></svg><svg class="badge"><use href="#warn"/></svg></div>
  </div>
  <div class="bookmarks">
    <a><svg><use href="#folder"/></svg>Personal</a><a><svg><use href="#folder"/></svg>World hub</a><a><svg><use href="#folder"/></svg>New earth</a><a><svg><use href="#folder"/></svg>Media</a><a><svg><use href="#folder"/></svg>Misc</a><a><svg><use href="#folder"/></svg>S21</a><a><svg><use href="#folder"/></svg>Development</a><a><svg><use href="#folder"/></svg>Technical Writing</a><a><svg><use href="#folder"/></svg>Getting hired</a><a><svg><use href="#folder"/></svg>for later</a><a><svg><use href="#folder"/></svg>Por el alma</a><a><svg><use href="#s-green"/></svg>the last pdf editor you...</a><a><svg><use href="#pillars"/></svg>A Dictionary of Symbols</a><a class="other"><svg><use href="#folder"/></svg>Other Bookmarks</a>
  </div>
  <div class="viewport">
    <div class="page aqua">
      <header class="navbar"><b>banDi</b><b>Welcome, Stefano Tusa!</b><span class="account">My Account</span></header>
      <div class="content search-content">
        <svg class="backdrop"><rect width="100%" height="100%" fill="url(#facets)"/></svg>
        <form class="filters">
          <label>Name: <span>ex: Slash</span></label>
          <label>Instrument: <span>ex: guitar</span></label>
          <label>Genre: <span>ex: rock</span></label>
          <label>Distance (miles): <span>ex: 15</span></label>
          <button type="button">Submit!</button>
        </form>
        <div class="musicians">
          <article><h2>Eric Cla</h2><p>Genres: Roc</p><p>Instruments</p><button class="tucked">View</button></article>
          <article><h2></h2><p>&nbsp;</p><p>&nbsp;</p><button></button></article>
          <article><h2>Ramchandran Muthukumar</h2><p>Genres: Jazz</p><p>Instruments: Saxophone</p><button>View More</button></article>
          <article><h2>Max Torres</h2><p>Genres: Rock, Classic Rock, Blues</p><p>Instruments: Guitar, Vocals</p><button>View More</button></article>
          <article><h2>George Michael</h2><p>Genres: Progressive Rock,<br>Psychedelic Rock</p><p>Instruments: Guitar, Vocals</p><button>View More</button></article>
          <article><h2>Robin Williams</h2><p>Genres: Progressive Rock,<br>Psychedelic Rock</p><p>Instruments: Saxophone</p><button>View More</button></article>
        </div>
      </div>
    </div>
    <div class="scrollbar"></div>
    <div class="shade"></div>
    <div class="modal">
      <div class="modal-head"><h2>Mariah Carey</h2><span>×</span></div>
      <div class="modal-body"><p>Location: San Diego, CA</p><p>Experience: Expert</p><p>Instruments: Guitar</p><p>Genres: Rock, Classic Rock, Blues</p><p>Links:</p></div>
      <div class="modal-foot"><button class="quiet">Close</button><button>Connect!</button></div>
    </div>
  </div>
  <footer class="taskbar">
    <i class="start"><svg><use href="#windows"/></svg></i><div class="search"><svg><use href="#magnifier"/></svg>Type here to search</div><i class="sys"><svg><use href="#cortana"/></svg></i><i class="sys"><svg><use href="#taskview"/></svg></i>
    <i class="app run front"><svg><use href="#firefox"/></svg></i><i class="app run"><svg><use href="#explorer"/></svg></i><i class="app"><svg><use href="#notepad"/></svg></i><i class="app run"><svg><use href="#sticky"/></svg></i><i class="app"><svg><use href="#outlook"/></svg></i><i class="app"><svg><use href="#mail"/></svg></i><i class="app"><svg><use href="#spotify"/></svg></i><i class="app run"><svg><use href="#vscode"/></svg></i><i class="app run"><svg><use href="#git"/></svg></i><i class="app run"><svg><use href="#intellij"/></svg></i><i class="app run"><svg><use href="#postman"/></svg></i>
    <div class="tray"><svg><use href="#t-up"/></svg><svg><use href="#t-plug"/></svg><svg><use href="#t-plane"/></svg><svg><use href="#t-sound"/></svg><svg><use href="#t-cloud"/></svg><span class="lang">ENG</span><span class="clock">11:25 AM<br>4/28/2021</span><svg class="note"><use href="#t-note"/></svg></div>
  </footer>
</section>

<p class="stray">'</p>

<!-- Speed dating -->
<section class="window win-dating">
  <div class="tabstrip tabs-7">
    <div class="tab"><svg class="fav"><use href="#firefox"/></svg><span>New Tab</span><svg class="x"><use href="#close"/></svg></div>
    <div class="tab"><svg class="fav"><use href="#f-piazza"/></svg><span>kng62mqj9ahwh</span><svg class="x"><use href="#close"/></svg></div>
    <div class="tab"><span>submission_1416.pdf</span><svg class="x"><use href="#close"/></svg></div>
    <div class="tab"><svg class="fav"><use href="#f-piazza"/></svg><span>EN. 601.476/676 (78 unre</span><svg class="x"><use href="#close"/></svg></div>
    <div class="tab whole"><svg class="fav"><use href="#f-box"/></svg><span>Books — Don Mee Choi</span><svg class="x"><use href="#close"/></svg></div>
    <div class="tab"><svg class="fav"><use href="#f-wiki"/></svg><span>The Woman Warrior - Wi</span><svg class="x"><use href="#close"/></svg></div>
    <div class="tab active blank"><span>Bandi</span><svg class="x"><use href="#close"/></svg></div>
    <svg class="newtab"><use href="#plus"/></svg>
    <div class="controls"><svg><use href="#minimize"/></svg><svg><use href="#restore"/></svg><svg><use href="#win-close"/></svg></div>
  </div>
  <div class="toolbar">
    <div class="nav"><i class="circle"><svg><use href="#back"/></svg></i><i class="off"><svg><use href="#forward"/></svg></i><i><svg><use href="#reload"/></svg></i><i><svg><use href="#home"/></svg></i></div>
    <div class="urlbar"><i><svg><use href="#shield"/></svg></i><i class="page-info"><svg><use href="#page"/></svg></i><p><b>localhost</b>:3000/#/speeddate</p><i><svg><use href="#dots"/></svg></i><i><svg><use href="#pocket"/></svg></i><i><svg><use href="#target"/></svg></i><i><svg><use href="#star"/></svg></i></div>
    <div class="addons"><svg class="ext"><use href="#extensions"/></svg></div>
    <div class="appmenu"><svg><use href="#menu"/></svg></div>
  </div>
  <div class="bookmarks">
    <a><svg><use href="#folder"/></svg>Personal</a><a><svg><use href="#folder"/></svg>World hub</a><a><svg><use href="#folder"/></svg>New earth</a><a><svg><use href="#folder"/></svg>Media</a><a><svg><use href="#folder"/></svg>Misc</a><a><svg><use href="#folder"/></svg>S21</a><a><svg><use href="#folder"/></svg>Development</a><a><svg><use href="#folder"/></svg>Technical Writing</a><a><svg><use href="#folder"/></svg>Getting hired</a><a><svg><use href="#folder"/></svg>for later</a><a><svg><use href="#folder"/></svg>Por el alma</a><a><svg><use href="#s-green"/></svg>the last pdf editor you...</a><a><svg><use href="#pillars"/></svg>A Dictionary of Symbols</a><a class="other"><svg><use href="#folder"/></svg>Other Bookmarks</a>
  </div>
  <div class="viewport">
    <div class="page yellow">
      <header class="navbar"><b>banDi</b><b>Welcome, Stefano Tusa!</b><span class="account">My Account</span></header>
      <div class="content">
        <svg class="backdrop"><rect width="100%" height="100%" fill="url(#facets)"/></svg>
        <p class="blurb first">Bandi speed-dating events are a great way to meet a lot of local<br>musicians in your area, fast!</p>
        <p class="blurb">How it works: Every 5 minutes, you get paired (virtually) with a<br>Bandi musician we think might be a good fit for you (based of<br>similar music interests, location, etc.). We'll do a couple of<br>these rounds — each time matching you up with a different Bandi<br>musician. Afterwards, you'll all go back to a main room where you<br>can mingle for a bit before the event wraps up.</p>
        <div class="events">
          <article><h2>Speed-Dating Part 2</h2><p>April 16, 2021 4-5pm</p><p class="link">https://zoom.us/</p><p class="min">Minimum number of<br>participants: 6</p><p class="reg">Registered participants: 1</p><button>View More</button></article>
          <article><h2>Speed-Dating Part 1</h2><p>April 15, 2021 8-9pm</p><p class="link">https://zoom.us/</p><p class="min">Minimum number of<br>participants: 4</p><p class="reg">Registered participants: 1</p><button>View More</button></article>
          <article class="create"><h2>Create Event: (Admin)</h2><p>Name</p><p>Link</p><p>Date</p><p class="num">1<i></i></p><button>Create Event</button></article>
        </div>
      </div>
    </div>
    <div class="scrollbar"><i class="up"></i><i class="thumb"></i><i class="down"></i></div>
  </div>
  <footer class="taskbar">
    <i class="start"><svg><use href="#windows"/></svg></i><div class="search"><svg><use href="#magnifier"/></svg>Type here to search</div><i class="sys"><svg><use href="#cortana"/></svg></i><i class="sys"><svg><use href="#taskview"/></svg></i>
    <i class="app run front"><svg><use href="#firefox"/></svg></i><i class="app run"><svg><use href="#explorer"/></svg></i><i class="app"><svg><use href="#notepad"/></svg></i><i class="app run"><svg><use href="#sticky"/></svg></i><i class="app"><svg><use href="#outlook"/></svg></i><i class="app"><svg><use href="#mail"/></svg><em>5</em></i><i class="app"><svg><use href="#spotify"/></svg></i><i class="app run"><svg><use href="#vscode"/></svg></i><i class="app run"><svg><use href="#git"/></svg></i><i class="app run"><svg><use href="#intellij"/></svg></i><i class="app run"><svg><use href="#postman"/></svg></i>
    <div class="tray"><svg><use href="#t-up"/></svg><svg><use href="#t-plug"/></svg><svg><use href="#t-plane"/></svg><svg><use href="#t-sound"/></svg><svg><use href="#t-cloud"/></svg><span class="lang">ENG</span><span class="clock">11:36 AM<br>4/29/2021</span><svg class="note"><use href="#t-note"/></svg></div>
  </footer>
</section>

<!-- Song of the week -->
<section class="window win-song">
  <div class="c-strip"><div class="c-tab"><span>Bandi</span><svg><use href="#close"/></svg></div><svg class="c-new"><use href="#plus"/></svg><svg class="c-media"><use href="#c-down"/></svg><div class="controls"><svg><use href="#minimize"/></svg><svg><use href="#restore"/></svg><svg><use href="#win-close"/></svg></div></div>
  <div class="c-bar"><i><svg><use href="#back"/></svg></i><i class="off"><svg><use href="#forward"/></svg></i><i><svg><use href="#reload"/></svg></i><div class="omnibox"><svg><use href="#c-info"/></svg><p><b>localhost</b>:3000/#/sotw</p><svg class="fav-star"><use href="#star"/></svg></div><i class="pz"><svg><use href="#c-puzzle"/></svg></i><span class="avatar">S</span><i><svg><use href="#c-kebab"/></svg></i></div>
  <div class="viewport">
    <div class="page mint">
      <header class="navbar"><b>banDi</b><b>Welcome, Stefano Tusa!</b><span class="account">My Account</span></header>
      <div class="content song-content">
        <svg class="backdrop"><rect width="100%" height="100%" fill="url(#facets)"/></svg>
        <p class="blurb">Show off your skills and check out what other<br>people on Bandi are all about! Bandi song of the<br>week is a place for users to share clips of<br>themselves playing popular songs so you can get<br>a better idea of who's doing what on Bandi...</p>
        <div class="columns">
          <aside>
            <h2>Event search</h2>
            <div class="calendar">
              <div class="cal-head"><strong>May 2021</strong><svg class="arrows" viewBox="0 0 44 18"><path d="M14 1v16L1 9zM31 1v16l13-8z"/></svg></div>
              <table>
                <thead><tr><th>Su</th><th>Mo</th><th>Tu</th><th>We</th><th>Th</th><th>Fr</th><th>Sa</th></tr></thead>
                <tbody>
                  <tr><td class="o">25</td><td class="o">26</td><td class="o">27</td><td class="o">28</td><td class="o">29</td><td class="o">30</td><td class="today">1</td></tr>
                  <tr><td>2</td><td>3</td><td>4</td><td>5</td><td>6</td><td>7</td><td>8</td></tr>
                  <tr><td>9</td><td>10</td><td>11</td><td>12</td><td>13</td><td>14</td><td>15</td></tr>
                  <tr><td>16</td><td>17</td><td>18</td><td>19</td><td>20</td><td>21</td><td>22</td></tr>
                  <tr><td>23</td><td>24</td><td>25</td><td>26</td><td>27</td><td>28</td><td>29</td></tr>
                  <tr><td>30</td><td>31</td><td class="o">1</td><td class="o">2</td><td class="o">3</td><td class="o">4</td><td class="o">5</td></tr>
                </tbody>
              </table>
            </div>
            <div class="genre"><div>Select a Genre<i></i></div></div>
            <button>See Events!</button>
          </aside>
          <div class="results">
            <div class="board"><div class="alert"><p>Select a week and genre to browse events!</p></div></div>
            <div class="submissions"><p>Here's where you'll see any<br>submissions you've made for<br>the currently selected Song<br>of the Week!</p></div>
          </div>
        </div>
      </div>
    </div>
    <div class="scrollbar"><i class="up"></i><i class="thumb"></i><i class="down"></i></div>
  </div>
  <footer class="taskbar">
    <i class="start"><svg><use href="#windows"/></svg></i><div class="search"><svg><use href="#magnifier"/></svg>Type here to search</div><i class="sys"><svg><use href="#cortana"/></svg></i><i class="sys"><svg><use href="#taskview"/></svg></i>
    <i class="app run"><svg><use href="#firefox"/></svg></i><i class="app run"><svg><use href="#explorer"/></svg></i><i class="app"><svg><use href="#notepad"/></svg></i><i class="app"><svg><use href="#sticky"/></svg></i><i class="app"><svg><use href="#outlook"/></svg></i><i class="app run"><svg><use href="#mail"/></svg><em>2</em></i><i class="app"><svg><use href="#spotify"/></svg></i><i class="app run"><svg><use href="#git"/></svg></i><i class="app run"><svg><use href="#vscode"/></svg></i><i class="app run"><svg><use href="#intellij"/></svg></i><i class="app run"><svg><use href="#postman"/></svg></i><i class="app run"><svg><use href="#chrome"/></svg></i>
    <div class="tray"><svg><use href="#t-up"/></svg><svg><use href="#t-plug"/></svg><svg><use href="#t-plane"/></svg><svg><use href="#t-sound"/></svg><svg><use href="#t-cloud"/></svg><span class="lang">ENG</span><span class="clock">2:51 PM<br>5/1/2021</span><svg class="note"><use href="#t-note"/></svg></div>
  </footer>
</section>
</main>
</body>
</html>
```
FILE: styles.css
```css
/* 1rem = 10 device pixels of a 1920x1080 desktop, drawn at 0.60664 */
html { font-size: 6.0664px; }
*, *::before, *::after { box-sizing: border-box; }
body { margin: 0; background: #fff; overflow: hidden; font-family: "Open Sans", sans-serif; color: #212529; }
h1, h2, h3, p, ul, dl { margin: 0; padding: 0; font-weight: 400; }
ul { list-style: none; }
i, em { font-style: normal; }
b { font-weight: inherit; }
svg { display: block; flex: none; }
button { font-family: inherit; color: inherit; padding: 0; margin: 0; display: block; }
.defs { position: absolute; width: 0; height: 0; }
.canvas { position: relative; width: 4096px; height: 1839px; overflow: hidden; }

.window { position: absolute; width: 192rem; height: 108rem; display: flex; flex-direction: column; background: #f5f6f7; }
.win-friends { left: 0; top: 0; }
.win-profile { left: 205.9rem; top: .3rem; clip-path: inset(.5rem .2rem 0 1.3rem); }
.win-search { left: 3.1rem; top: 117.1rem; clip-path: inset(1.3rem .2rem 0 1.7rem); }
.win-dating { left: 216.65rem; top: 137.5rem; clip-path: inset(.9rem 0 0 .95rem); }
.win-song { left: 428.3rem; top: 35.9rem; clip-path: inset(.9rem 0 0 .5rem); background: #35363a; }
.stray { position: absolute; left: 242.9rem; top: 135.2rem; font: 3.6rem/1 "Open Sans", sans-serif; color: #000; }

/* Firefox chrome */
.tabstrip { display: flex; height: 4.1rem; background: #e3e4e6; border-bottom: 1px solid #a5a6a8; }
.tab { display: flex; align-items: center; flex: none; height: 4.1rem; padding: .2rem 1.35rem 0 1.1rem; border-right: 1px solid #a9aaac; font-size: 1.44rem; letter-spacing: -.04em; color: #1c1c1f; }
.tabs-8 .tab { width: 20.73rem; }
.tabs-4 .tab { width: 28.1rem; }
.tabs-7 .tab { width: 23.7rem; }
.tab span { flex: 1; min-width: 0; overflow: hidden; white-space: nowrap; margin-right: .4rem; -webkit-mask-image: linear-gradient(90deg, #000 82%, transparent); mask-image: linear-gradient(90deg, #000 82%, transparent); }
.tab.whole span { -webkit-mask-image: none; mask-image: none; }
.tab .fav { width: 2rem; height: 2rem; margin-right: .85rem; }
.tab.blank { padding-left: 4rem; }
.tab .x { width: 1.7rem; height: 1.7rem; color: #222; }
.tab.active { background: #f5f6f7; box-shadow: inset 0 2px #0a84ff; }
.tab.attention { background: linear-gradient(#111, #111) 2rem 3.55rem / calc(100% - 4.2rem) .35rem no-repeat; }
.newtab { width: 2rem; height: 2rem; margin: 1.1rem; color: #55565a; }
.controls { display: flex; margin-left: auto; }
.controls svg { width: 2rem; height: 2rem; margin: 1rem 1.85rem; color: #111; }
.toolbar { display: flex; align-items: center; height: 5.1rem; }
.nav { display: flex; width: 27.2rem; padding-left: .5rem; }
.nav i { display: flex; align-items: center; justify-content: center; width: 4.03rem; height: 4.2rem; color: #4a4b4f; }
.nav svg { width: 2.4rem; height: 2.4rem; }
.nav .off { color: #b3b4b6; }
.nav .circle { border: 1px solid #b1b1b3; border-radius: 50%; background: #fbfbfb; }
.urlbar { display: flex; align-items: center; width: 92.7rem; height: 3.8rem; background: #fff; border: 1px solid #c9cacc; border-radius: 2px; box-shadow: 0 1px 3px rgba(0,0,0,.12); }
.urlbar i { display: flex; align-items: center; justify-content: center; width: 3.5rem; height: 100%; color: #66676a; }
.urlbar i svg { width: 2rem; height: 2rem; }
.urlbar .page-info { width: 3.6rem; position: relative; border-left: 1px solid #ddd; height: 2.6rem; }
.urlbar .hover { background: #ececed; }
.urlbar p { flex: 1; font-size: 1.6rem; letter-spacing: -.018em; color: #85868a; }
.urlbar b { color: #0c0c0d; }
.addons { display: flex; justify-content: flex-end; width: 66.4rem; }
.addons svg { height: 2rem; }
.addons .dl { width: 2rem; margin-right: 2rem; }
.addons .ext { width: 52rem; margin-right: .85rem; }
.appmenu { position: relative; flex: 1; margin-left: .5rem; border-left: 1px solid #cfcfd1; height: 4.2rem; display: flex; align-items: center; padding-left: 1.6rem; color: #4a4b4f; }
.appmenu svg { width: 2rem; height: 2rem; }
.appmenu .badge { position: absolute; left: 2.9rem; top: .6rem; width: 1.6rem; height: 1.6rem; }
.bookmarks { display: flex; align-items: center; height: 3.5rem; padding: 0 1.3rem 0 1.5rem; border-bottom: 1px solid #c8c9cb; font-size: 1.44rem; letter-spacing: -.02em; color: #15151a; white-space: nowrap; }
.bookmarks a { display: flex; align-items: center; flex: none; width: 9.5rem; }
.bookmarks a svg { width: 2rem; height: 1.9rem; margin-right: .5rem; }
.bookmarks a:nth-child(2) { width: 10.9rem; }
.bookmarks a:nth-child(3) { width: 10.8rem; }
.bookmarks a:nth-child(4) { width: 8.2rem; }
.bookmarks a:nth-child(5) { width: 7rem; }
.bookmarks a:nth-child(6) { width: 6.4rem; }
.bookmarks a:nth-child(7) { width: 13rem; }
.bookmarks a:nth-child(8) { width: 15.4rem; }
.bookmarks a:nth-child(9) { width: 12.7rem; }
.bookmarks a:nth-child(10) { width: 9.3rem; }
.bookmarks a:nth-child(11) { width: 11.4rem; }
.bookmarks a:nth-child(12) { width: 20rem; }
.bookmarks a:nth-child(13) { width: auto; }
.bookmarks a:nth-child(n+12):nth-child(-n+13) svg { margin-right: .7rem; height: 2rem; }
.bookmarks .other { width: 13.9rem; margin-left: auto; }
.tooltip { position: absolute; left: 119.2rem; top: 8.6rem; z-index: 2; width: 20.5rem; height: 2.7rem; padding-left: .8rem; background: #fff; border: 1px solid #777; font-size: 1.46rem; line-height: 2.6rem; letter-spacing: -.025em; color: #111; white-space: nowrap; }

/* Page frame */
.viewport { position: relative; flex: 1; min-height: 0; display: flex; overflow: hidden; }
.page { width: 189.9rem; display: flex; flex-direction: column; }
.navbar { display: flex; align-items: center; justify-content: space-between; flex: none; height: 7rem; padding: .4rem 4.1rem 0 2.1rem; background: #353940; color: #fff; font-size: 2.48rem; letter-spacing: -.014em; }
.account { display: flex; align-items: center; font-size: 2rem; }
.account::after { content: ""; margin: -.4rem 0 0 .5rem; border: .6rem solid transparent; border-top-color: #fff; border-bottom: 0; }
.content { position: relative; flex: 1; min-height: 0; overflow: hidden; font-family: "DejaVu Sans Mono", monospace; font-size: 1.827rem; }
.content > *:not(.backdrop) { position: relative; }
.backdrop { position: absolute; inset: 0; width: 100%; height: 100%; }
.lilac { background: #eadcec; }
.aqua { background: #bbf2f8; }
.yellow { background: #ffffc0; }
.mint { background: #a6ffd8; }
.scrollbar { flex: 1; display: flex; flex-direction: column; align-items: center; background: #f0f0f0; border-left: 1px solid #fff; }
.scrollbar .thumb { width: 1.8rem; background: #cdcdcd; }
.scrollbar .up, .scrollbar .down { height: 2.1rem; width: 100%; display: flex; align-items: center; justify-content: center; }
.scrollbar .down { margin-top: auto; }
.scrollbar .up::after, .scrollbar .down::after { content: ""; width: .8rem; height: .8rem; border: solid #555; border-width: 1px 0 0 1px; transform: translateY(.2rem) rotate(45deg); }
.scrollbar .down::after { transform: translateY(-.2rem) rotate(225deg); }
.win-friends .thumb { height: 74.5rem; }
.win-profile .thumb { height: 70rem; }
.win-dating .thumb { height: 55.8rem; }

/* Profile and friends */
.pills-nav { display: flex; justify-content: center; padding-top: 3.9rem; }
.pills-nav a { height: 4.9rem; padding: 0 1.55rem; line-height: 4.6rem; background: #dcbfe0; border: 1px solid #000; border-width: 2px 1px; border-radius: 5px 5px 0 0; white-space: nowrap; }
.pills-nav a:first-child { border-left-width: 2px; }
.pills-nav a.on { background: #fff; color: #000; }
.panel { width: 113.8rem; margin: 0 auto; background: #cd7fd1; border: solid #000; border-width: 2px 1px 4.5px 2px; border-radius: 1.3rem; }
.friends-panel { height: 49.5rem; padding: 3rem 2.9rem; }
.label, .people li, .requests li { width: max-content; border: solid #212529; border-width: 1px 1px 3px 2px; border-radius: .8rem; white-space: nowrap; }
.label { height: 4.4rem; padding: 0 1.8rem 0 .5rem; line-height: 3.7rem; background: #dfbfe1; font-size: inherit; }
.label.wide { width: 34.3rem; height: 4.5rem; }
.people, .requests { display: flex; gap: 1.3rem; padding-left: 5.6rem; margin: 2.5rem 0 2.7rem; }
.people li { height: 4.2rem; padding: 0 1.2rem; line-height: 3.6rem; background: #cfbdec; }
.label:first-child { width: 17.5rem; }
.pending li { background: #b094e9; }
.requests { margin-bottom: 2.6rem; }
.requests li { display: flex; width: 31.9rem; height: 5.2rem; padding: .35rem 0 0 1.2rem; line-height: 3.7rem; background: #dfeabc; }
.requests li + li { width: 36.2rem; }
.requests button { height: 4.1rem; border: solid #000; border-width: 1px 1px 3px; border-radius: .5rem; color: #fff; font-size: 1.28rem; line-height: 3.4rem; }
.accept { width: 8.1rem; margin-left: auto; background: #008000; }
.decline { width: 9rem; margin: 0 1.8rem 0 1.2rem; background: #f00; }
.profile-panel { height: 55.4rem; padding: 3rem 2.9rem; }
.edit { width: 16.6rem; height: 5.2rem; border: solid #343a40; border-width: 1px 1px 4px 2px; border-radius: .5rem; background: #cf629c; color: #343a40; font-size: 1.827rem; line-height: 4.6rem; }
.profile-panel h1 { width: 37.5rem; height: 5.4rem; margin: 0 auto 3.2rem; background: #f6e6f6; border: solid #212529; border-width: 2px 1px 4px 2px; border-radius: 1.2rem; font-size: 3.654rem; font-weight: 700; line-height: 4.6rem; text-align: center; }
.profile-panel dl div { width: 53.8rem; height: 4.2rem; margin: 0 auto 2rem; padding: 0 .5rem; background: #dfbfe1; border: solid #212529; border-width: 2px 1px 3px 2px; border-radius: 1.3rem; font-size: 2.74rem; line-height: 3.55rem; white-space: nowrap; }
.profile-panel dl .two { height: 7.8rem; }
.profile-panel dl b { font-weight: 700; margin-left: .9rem; }

/* Musician search */
.search-content { display: flex; padding: 13.3rem 0 0 1.9rem; }
.filters { width: 49.3rem; flex: none; }
.filters label { display: flex; align-items: flex-start; width: 43.7rem; height: 5.8rem; margin-bottom: 2.65rem; padding: 0 .8rem 0 3.2rem; border: solid #212529; border-width: 1px 2px 4px 2px; border-radius: 1.4rem; background: #74aee2; font-size: 2.284rem; line-height: 4.3rem; white-space: pre; }
.filters label span { flex: 1; height: 4.1rem; margin-top: .55rem; padding-left: 1.3rem; border: 1px solid #111; border-radius: 1.3rem; background: #e4e9ed; color: #6c757d; font-size: 1.827rem; line-height: 3.9rem; }
.filters button { width: 10.6rem; height: 5rem; margin: 3.1rem 0 0 .6rem; }
.filters button, .musicians button { border: solid #000; border-width: 1px 1px 4px 2px; border-radius: .9rem; background: #434cd8; color: #000; font-size: 1.827rem; line-height: 4.2rem; }
.musicians { display: grid; grid-template-columns: repeat(3, 37.9rem); column-gap: 3.85rem; grid-template-rows: 35rem auto; align-items: start; }
.musicians article { padding: 2.6rem 2.5rem 2.7rem 2.5rem; border: solid #000; border-width: 1px 1px 3px 2px; border-radius: 1.3rem; background: #74aee2; }
.musicians h2 { height: 3rem; margin-bottom: 1.4rem; font-size: 2.284rem; font-weight: 700; line-height: 3rem; color: #000; white-space: nowrap; }
.musicians p { margin-bottom: 1.9rem; padding: 0 1.3rem; border: 1px solid #000; border-radius: 1.3rem; background: #fff; font-size: 1.462rem; font-style: oblique; line-height: 2.4rem; white-space: nowrap; }
.musicians button { width: 21.3rem; height: 4.9rem; }
.musicians .tucked { padding-left: 5.6rem; text-align: left; }
.shade { position: absolute; inset: 0; background: rgba(0,0,0,.5); }
.win-search .viewport { background: #fff; }
.win-search .scrollbar { background: #fff; }
.modal { position: absolute; left: 64.8rem; top: 3.5rem; width: 62.5rem; height: 49.3rem; border: 2px solid #000; border-radius: .7rem; background: #74ade5; font-family: "DejaVu Sans Mono", monospace; font-size: 2.284rem; white-space: nowrap; }
.modal-head { display: flex; justify-content: space-between; height: 9.7rem; padding: 1.9rem 1.9rem 0; border-bottom: 1px solid #b9d6f2; }
.modal-head h2 { width: 22.8rem; height: 5.8rem; border: solid #000; border-width: 2px 1px 4px 3px; border-radius: 1.2rem; background: #fff; font-size: 2.74rem; font-weight: 700; line-height: 4.7rem; text-align: center; }
.modal-head span { padding-right: .3rem; font: 700 3rem/4rem "Open Sans", sans-serif; color: #35597c; }
.modal-body { height: 30.1rem; padding: 2rem 1.9rem 0; border-bottom: 1px solid #b9d6f2; }
.modal-body p { width: max-content; height: 4.2rem; margin-bottom: 1rem; padding: 0 1.3rem; border: solid #212529; border-width: 1px 1px 3px 2px; border-radius: 1.3rem; background: #a0ecfa; line-height: 3.5rem; }
.modal-foot { display: flex; justify-content: flex-end; gap: 1rem; padding: 2rem 1.9rem 0; }
.modal-foot button { width: 11.8rem; height: 5rem; border: solid #000; border-width: 1px 1px 4px 3px; border-radius: .8rem; background: #f1eff0; color: #000; font-size: 1.827rem; line-height: 4rem; }
.modal-foot .quiet { width: 8.5rem; background: #8086e0; }

/* Speed dating */
.blurb { width: 76rem; margin: 0 auto 2rem; padding: .25rem 1.3rem .45rem; border: solid #212529; border-width: 1px 1px 3px 2px; border-radius: 1.3rem; background: #fff; line-height: 3rem; white-space: nowrap; }
.blurb.first { margin-top: 5rem; height: 7.2rem; }
.yellow .blurb:not(.first) { height: 19.1rem; padding-top: .35rem; }
.events { display: flex; gap: 12.35rem; margin: 8.4rem 0 0 12.4rem; }
.events article { width: 44.5rem; height: 60rem; padding: 8rem 4rem 0 4rem; border: solid #000; border-width: 1px 1px 3px 2px; border-radius: 1.3rem; background: #e6e44b; }
.events h2, .events p { border: solid #212529; border-width: 1px 1px 3px 2px; border-radius: 1.2rem; background: #fff; white-space: nowrap; padding-left: 1.3rem; }
.events h2 { height: 4.2rem; margin-bottom: 1.5rem; background: #fff598; font-size: 2.284rem; line-height: 3.6rem; }
.events p { height: 3.6rem; margin-bottom: 1rem; line-height: 2.9rem; }
.events .link { color: #007bff; }
.events .min { height: 7.2rem; line-height: 3rem; margin-bottom: 2rem; padding-top: .2rem; }
.events .reg { height: 4.2rem; margin-bottom: 2rem; line-height: 3.4rem; }
.events button { width: 12.8rem; height: 5rem; border: solid #000; border-width: 1px 1px 3px 2px; border-radius: .8rem; background: #f99a07; color: #000; font-size: 1.827rem; line-height: 4.2rem; white-space: nowrap; }
.events .create h2 { height: 3.6rem; margin-bottom: 1.1rem; padding-left: .1rem; background: none; border-color: #000; line-height: 3.1rem; }
.events .create p { height: 4.75rem; margin-bottom: 2rem; padding-left: 1.2rem; border-width: 2px 2px 3px 2px; border-color: #000; color: #6c757d; line-height: 3.8rem; }
.events .create .num { display: flex; align-items: center; justify-content: space-between; padding-right: 1.3rem; margin-bottom: 2rem; color: #495057; }
.num i { width: 1.9rem; height: 1.7rem; background: #e3e3e3; display: flex; flex-direction: column; align-items: center; justify-content: space-evenly; }
.num i::before, .genre i::before { content: ""; border: .45rem solid transparent; border-top: 0; border-bottom-color: #222; }
.num i::after, .genre i::after { content: ""; border: .45rem solid transparent; border-bottom: 0; border-top-color: #222; }
.create button { width: 16.2rem; }

/* Song of the week, in Chrome */
.c-strip { display: flex; height: 4.2rem; background: #3c4043; padding-left: .95rem; color: #dfe1e5; }
.c-tab { display: flex; align-items: center; justify-content: space-between; width: 30rem; padding: 0 1.3rem 0 4.5rem; background: #35363a; border-radius: .8rem .8rem 0 0; font-size: 1.46rem; letter-spacing: -.02em; color: #cfd1d4; }
.c-tab svg { width: 1.5rem; height: 1.5rem; }
.c-new { width: 1.8rem; height: 1.8rem; margin: 1.2rem 1.9rem; color: #bdc1c6; }
.c-media { width: 1.9rem; height: 1.9rem; margin: 1.2rem 1.7rem 0 auto; }
.c-strip .controls { margin-left: 0; }
.c-strip .controls svg { color: #a5a8ab; margin-top: .8rem; }
.c-bar { display: flex; align-items: center; height: 4.7rem; padding-left: .7rem; background: #35363a; border-bottom: 1px solid #25262a; color: #f1f3f4; }
.c-bar i { display: flex; justify-content: center; width: 4rem; }
.c-bar i svg { width: 2.1rem; height: 2.1rem; }
.c-bar .off { color: #8b8d90; }
.omnibox { display: flex; align-items: center; width: 165rem; height: 3.5rem; margin-left: .8rem; padding: 0 1.2rem 0 1.3rem; border-radius: 1.8rem; background: #202124; }
.omnibox svg { width: 1.8rem; height: 1.8rem; color: #dcdde0; }
.omnibox p { flex: 1; margin-left: 1.2rem; font-size: 1.62rem; letter-spacing: -.01em; color: #8f9296; }
.omnibox b { color: #fff; }
.c-bar .pz { margin-left: .8rem; }
.avatar { width: 2.8rem; height: 2.8rem; margin: 0 .5rem 0 .6rem; border-radius: 50%; background: #c2185b; color: #fff; font-size: 1.5rem; line-height: 2.7rem; text-align: center; }
.win-song .scrollbar { background: #f1f1f1; border: 0; }
.win-song .thumb { width: 1.7rem; height: 25.7rem; background: #c1c1c1; }
.win-song .up::after, .win-song .down::after { width: 0; height: 0; border: .5rem solid transparent; border-bottom-color: #8c8c8c; border-top: 0; transform: none; }
.win-song .down::after { border-bottom: 0; border-top: .5rem solid #505050; }
.song-content .blurb { width: 57rem; height: 18.2rem; margin: 5.6rem auto 0; border-color: #000; border-width: 2px 2px 4px 3px; padding: .15rem 1.1rem 0; }
.columns { display: flex; align-items: flex-start; margin: 5.7rem 0 0 13.5rem; gap: 17.2rem; }
.columns aside { width: 39.5rem; flex: none; }
aside h2 { width: 28.4rem; height: 4.4rem; margin: 0 auto 1.8rem; border: solid #212529; border-width: 1px 1px 4px 3px; border-radius: 1.2rem; background: #68efc2; font-size: 2.74rem; line-height: 3.7rem; text-align: center; padding-left: .8rem; }
.calendar { height: 36.5rem; padding: 2.2rem 4rem 0 4.7rem; border: solid #000; border-width: 2px 2px 4px 3px; border-radius: 1.3rem; background: #7fffd4; }
.cal-head { display: flex; align-items: flex-start; }
.cal-head strong { width: 16.1rem; height: 4.2rem; margin-right: auto; border: solid #000; border-width: 2px 2px 4px 3px; border-radius: 1.2rem; padding-left: .9rem; background: #fff; font-weight: 400; font-size: 2.056rem; line-height: 3.3rem; }
.arrows { width: 4.4rem; height: 1.8rem; margin: .1rem -.6rem 0 0; fill: #8b9a98; }
.calendar table { width: 25.9rem; margin: 1.2rem 0 0 3.4rem; border-collapse: collapse; table-layout: fixed; }
.calendar th { height: 3.9rem; padding: 0; font-size: 1.55rem; font-weight: 400; color: #000; }
.calendar td { height: 3.7rem; padding: 0; border: 1.5px solid #000; background: #fff; font-size: 1.827rem; line-height: 3.2rem; text-align: center; }
.calendar .o { color: #8b9a98; }
.calendar .today { color: #c8102e; font-weight: 700; }
.genre { width: 33.2rem; height: 7.5rem; margin: 2rem auto 1.8rem 3.1rem; border: solid #000; border-width: 2px 2px 4px 3px; border-radius: 1.2rem; background: #fff; }
.genre div { display: flex; align-items: center; justify-content: space-between; height: 4.7rem; padding: 0 1.4rem 0 1.5rem; border-bottom: 1px solid #ced4da; border-radius: .5rem; color: #495057; }
.genre i { display: flex; flex-direction: column; gap: .15rem; }
aside button { width: 15.1rem; height: 6rem; margin-left: 12.2rem; border: solid #000; border-width: 2px 1px 4px 3px; border-radius: .9rem; background: #68efc2; color: #000; font-size: 1.827rem; line-height: 3.7rem; padding-bottom: 1rem; }
.results { width: 106.5rem; margin-top: .6rem; }
.board { height: 37.5rem; border: solid #000; border-width: 1px 2px 4px 2px; border-radius: 1.3rem; background: #7fffd4; padding: .2rem .1rem; }
.alert { height: 14.5rem; padding: 4.1rem 4rem 0; border: 1px solid #68e0ba; border-radius: .5rem; }
.alert p { height: 6.1rem; padding-left: 1.2rem; border: solid #2b403b; border-width: 2px 2px 4px 2px; border-radius: 1.3rem; background: #f2fffb; color: #2b403b; font-size: 2.96rem; line-height: 5.1rem; white-space: nowrap; }
.submissions { width: 68.3rem; height: 30rem; margin: 3.8rem auto 0; padding-top: 4.6rem; border: solid #000; border-width: 2px 2px 4px 2px; border-radius: 1.5rem; background: #7fffd4; }
.submissions p { width: 33.9rem; height: 20rem; margin: 0 0 0 16.3rem; padding: .2rem 1.2rem; border: solid #212529; border-width: 2px; border-radius: 1.4rem; background: #fff; line-height: 2.98rem; white-space: nowrap; }

/* Windows taskbar */
.taskbar { display: flex; flex: none; height: 5rem; background: linear-gradient(90deg, #1d1d1d 0 27%, #212121 78%, #474747 85%); color: #f2f2f2; --accent: #fbd9b4; }
.win-friends .taskbar { background: linear-gradient(90deg, #1d2023 0 25%, #12222d 27%, #1c1f21 31%, #232323 78%, #474747 82%, #444); }
.win-profile .taskbar { background: #211f1e; }
.win-search .taskbar { --accent: #99cdf5; }
.win-dating .taskbar { background: linear-gradient(90deg, #26261e, #10181d 27%, #161a1d 60%, #24141a 75%, #140c10 82%, #221a1c); --accent: #fcc3a9; }
.win-song .taskbar { background: linear-gradient(90deg, #202020 80%, #282626); --accent: #fcc3a9; }
.taskbar i { position: relative; display: flex; align-items: center; justify-content: center; flex: none; }
.start { width: 6.1rem; }
.start svg, .sys svg { width: 2.1rem; height: 2.1rem; }
.search { display: flex; align-items: center; width: 43rem; padding-left: 1.3rem; background: #333; border: 1px solid #4f4f4f; border-width: 1px 1px 0; font-size: 1.8rem; letter-spacing: -.005em; color: #dcdcdc; }
.search svg { width: 2.1rem; height: 2.1rem; margin-right: 1.3rem; }
.sys { width: 6rem; }
.sys + .sys { width: 6.2rem; }
.app { width: 6.2rem; }
.app svg { width: 2.9rem; height: 2.9rem; }
.app.run::after { content: ""; position: absolute; left: .5rem; right: .5rem; bottom: 0; height: 2px; background: var(--accent); }
.app.front { background: linear-gradient(90deg, transparent .2rem, #545454 .2rem 5.7rem, #404040 5.7rem 6rem, transparent 6rem); }
.app.front::after { left: .2rem; }
.app.alerting { background: #ab622b; border-bottom: 2px solid #ff6a00; }
.app em { position: absolute; right: .5rem; bottom: .5rem; width: 1.8rem; height: 1.8rem; border: 1px solid #9aa; border-radius: 50%; background: #26323a; font-size: 1.3rem; line-height: 1.5rem; text-align: center; color: #fff; }
.tray { display: flex; align-items: center; margin-left: auto; margin-right: .4rem; padding-right: 1.4rem; border-right: 1px solid #6a6a6a; white-space: nowrap; }
.tray svg { width: 2rem; height: 2rem; margin: 0 .5rem; }
.lang { width: 4.6rem; font-size: 1.48rem; text-align: center; letter-spacing: -.02em; }
.clock { width: 8.2rem; font-size: 1.48rem; line-height: 2.3rem; text-align: center; letter-spacing: -.02em; }
.tray .note { width: 2.2rem; height: 2.2rem; margin: 0 1.4rem; }
```
